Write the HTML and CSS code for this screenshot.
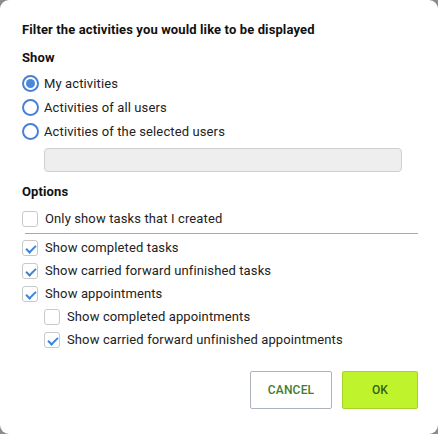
FILE: index.html
```html
<!DOCTYPE html>
<html lang="en">

<head>
    <meta charset="UTF-8">
    <meta name="viewport" content="width=device-width, initial-scale=1.0">
    <title>Filter activities</title>
    <link rel="stylesheet" href="styles.css">
</head>

<body>
    <div class="dialog">
        <h1 class="title">Filter the activities you would like to be displayed</h1>

        <h2 class="section">Show</h2>
        <label class="row radio-row">
            <span class="radio checked"></span>
            <span>My activities</span>
        </label>
        <label class="row radio-row">
            <span class="radio"></span>
            <span>Activities of all users</span>
        </label>
        <label class="row radio-row">
            <span class="radio"></span>
            <span>Activities of the selected users</span>
        </label>
        <div class="users-box"></div>

        <h2 class="section options">Options</h2>
        <label class="row check-row">
            <span class="check"></span>
            <span>Only show tasks that I created</span>
        </label>
        <div class="divider"></div>
        <label class="row check-row">
            <span class="check checked"></span>
            <span>Show completed tasks</span>
        </label>
        <label class="row check-row">
            <span class="check checked"></span>
            <span>Show carried forward unfinished tasks</span>
        </label>
        <label class="row check-row">
            <span class="check checked"></span>
            <span>Show appointments</span>
        </label>
        <label class="row check-row sub">
            <span class="check"></span>
            <span>Show completed appointments</span>
        </label>
        <label class="row check-row sub">
            <span class="check checked"></span>
            <span>Show carried forward unfinished appointments</span>
        </label>

        <div class="actions">
            <button class="btn cancel">Cancel</button>
            <button class="btn ok">OK</button>
        </div>
    </div>
</body>

</html>
```

FILE: styles.css
```css
* {
    margin: 0;
    padding: 0;
    box-sizing: border-box;
}

body {
    width: 438px;
    height: 434px;
    background: #8c8c8c;
    font-family: Roboto, "Liberation Sans", sans-serif;
    font-size: 13px;
    letter-spacing: 0.12px;
    color: #222;
}

.dialog {
    width: 438px;
    height: 434px;
    background: #fff;
    border-radius: 9px;
    padding: 20px 20px 0 22px;
}

.title {
    font-size: 13px;
    font-weight: 700;
    line-height: 20px;
    color: #111;
}

.section {
    font-size: 13px;
    font-weight: 700;
    line-height: 20px;
    margin-top: 8px;
    color: #111;
}

.section.options {
    margin-top: 10px;
}

.row {
    display: flex;
    align-items: center;
    gap: 7px;
}

.radio-row {
    height: 24px;
    gap: 5px;
}

.radio-row:first-of-type {
    margin-top: 3px;
}

.radio {
    width: 17px;
    height: 17px;
    border: 2px solid #4a80d4;
    border-radius: 50%;
    display: flex;
    align-items: center;
    justify-content: center;
}

.radio.checked::after {
    content: '';
    width: 9px;
    height: 9px;
    border-radius: 50%;
    background: #4a88d8;
}

.users-box {
    width: 358px;
    height: 24px;
    margin: 5px 0 0 22px;
    background: #eeeeee;
    border: 1px solid #cfcfcf;
    border-radius: 4px;
}

.check-row {
    height: 23px;
}

.check-row.sub {
    padding-left: 22px;
}

.section.options + .check-row {
    margin-top: 5px;
}

.check {
    width: 16px;
    height: 16px;
    border: 1px solid #c9c9c9;
    border-radius: 3px;
    position: relative;
}

/* galka v checkboxe */
.check.checked::after {
    content: '';
    position: absolute;
    left: 5px;
    top: 2px;
    width: 4px;
    height: 8px;
    border-right: 2px solid #3d86d9;
    border-bottom: 2px solid #3d86d9;
    transform: rotate(45deg);
}

.divider {
    height: 1px;
    background: #a8a8a8;
    margin: 3px 0 2px 3px;
}

.actions {
    display: flex;
    justify-content: flex-end;
    gap: 10px;
    margin-top: 20px;
}

.btn {
    height: 38px;
    font-family: Roboto, "Liberation Sans", sans-serif;
    font-size: 12px;
    font-weight: 500;
    letter-spacing: 0.2px;
    text-transform: uppercase;
    border-radius: 2px;
    cursor: pointer;
}

.btn.cancel {
    width: 82px;
    background: #fff;
    border: 1px solid #aeb4bc;
    color: #3f7d2c;
}

.btn.ok {
    width: 76px;
    background: #bff42c;
    border: 1px solid #a7d424;
    color: #33601c;
}
```
